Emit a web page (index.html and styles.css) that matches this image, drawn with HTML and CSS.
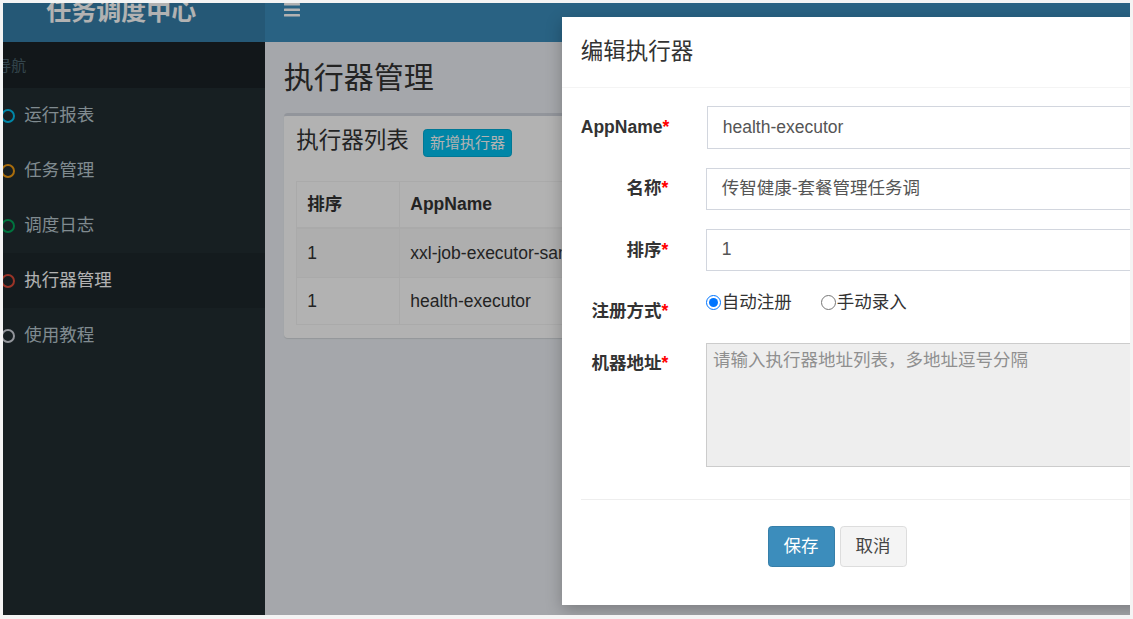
FILE: index.html
```html
<!DOCTYPE html>
<html lang="zh-CN">
<head>
<meta charset="utf-8">
<title>执行器管理</title>
<link rel="stylesheet" href="styles.css">
</head>
<body>
<div class="screen">
  <div class="app">
    <aside class="side-col">
      <div class="logo"><b>任务调度中心</b></div>
      <nav class="sidebar">
        <div class="menu-header">导航</div>
        <ul class="menu">
          <li><a><i class="ring aqua"></i><span>运行报表</span></a></li>
          <li><a><i class="ring yellow"></i><span>任务管理</span></a></li>
          <li><a><i class="ring green"></i><span>调度日志</span></a></li>
          <li class="active"><a><i class="ring red"></i><span>执行器管理</span></a></li>
          <li><a><i class="ring gray"></i><span>使用教程</span></a></li>
        </ul>
      </nav>
    </aside>
    <div class="main-col">
      <header class="navbar">
        <svg class="toggle" width="16" height="14" viewBox="0 0 16 14">
          <rect x="0" y="0" width="16" height="2.5" rx="0.6"/>
          <rect x="0" y="5.5" width="16" height="2.5" rx="0.6"/>
          <rect x="0" y="11" width="16" height="2.5" rx="0.6"/>
        </svg>
      </header>
      <section class="content-header">
        <h1>执行器管理</h1>
      </section>
      <section class="content">
        <div class="box">
          <div class="box-header">
            <h3 class="box-title">执行器列表</h3>
            <span class="btn-add">新增执行器</span>
          </div>
          <div class="box-body">
            <table class="grid">
              <thead>
                <tr class="head"><th class="c1">排序</th><th>AppName</th></tr>
              </thead>
              <tbody>
                <tr class="r1 striped"><td class="c1">1</td><td>xxl-job-executor-sample</td></tr>
                <tr class="r2"><td class="c1">1</td><td>health-executor</td></tr>
              </tbody>
            </table>
          </div>
        </div>
      </section>
    </div>
  </div>

  <div class="backdrop"></div>

  <div class="modal">
    <div class="modal-header">
      <h4 class="modal-title">编辑执行器</h4>
    </div>
    <div class="modal-body">
      <div class="form-row">
        <label class="ctl-label">AppName<span class="req">*</span></label>
        <div class="ctl"><div class="field">health-executor</div></div>
      </div>
      <div class="form-row">
        <label class="ctl-label">名称<span class="req">*</span></label>
        <div class="ctl"><div class="field">传智健康-套餐管理任务调</div></div>
      </div>
      <div class="form-row">
        <label class="ctl-label">排序<span class="req">*</span></label>
        <div class="ctl"><div class="field">1</div></div>
      </div>
      <div class="form-row">
        <label class="ctl-label">注册方式<span class="req">*</span></label>
        <div class="ctl radios">
          <label class="opt"><input type="radio" name="addressType" checked><span>自动注册</span></label>
          <label class="opt second"><input type="radio" name="addressType"><span>手动录入</span></label>
        </div>
      </div>
      <div class="form-row last">
        <label class="ctl-label">机器地址<span class="req">*</span></label>
        <div class="ctl"><div class="area"><span class="ph">请输入执行器地址列表，多地址逗号分隔</span></div></div>
      </div>
      <hr class="sep">
      <div class="actions">
        <span class="btn btn-primary">保存</span>
        <span class="btn btn-default">取消</span>
      </div>
    </div>
  </div>
</div>
</body>
</html>
```

FILE: styles.css
```css
* { box-sizing: border-box; }

html, body {
  margin: 0;
  padding: 0;
  background: #f4f4f4;
}

body {
  font-family: "Liberation Sans", "Noto Sans CJK SC", sans-serif;
  color: #333;
}

.screen {
  position: relative;
  margin: 3px 0 0 3px;
  width: 1127px;
  height: 612px;
  overflow: hidden;
}

.app {
  display: flex;
  margin-left: -25.5px;
  margin-top: -23.5px;
  width: 1400px;
  height: 640px;
}

/* ---------- left column ---------- */
.side-col {
  width: 287.5px;
  flex: 0 0 287.5px;
  background: #222d32;
  display: flex;
  flex-direction: column;
}

.logo {
  height: 62.5px;
  line-height: 62.5px;
  background: #367fa9;
  color: #fff;
  text-align: center;
  font-size: 25px;
  overflow: hidden;
}

.logo b { font-weight: 700; }

.menu-header {
  padding: 12.5px 31.25px 12.5px 18.75px;
  font-size: 15px;
  line-height: 21.4px;
  color: #4b646f;
  background: #1a2226;
}

.menu {
  list-style: none;
  margin: 0;
  padding: 0;
}

.menu li a {
  display: flex;
  align-items: center;
  height: 55px;
  padding-left: 18.75px;
  border-left: 3.75px solid transparent;
  color: #b8c7ce;
  font-size: 17.5px;
  line-height: 25px;
}

.menu li.active a {
  background: #1e282c;
  border-left-color: #3c8dbc;
  color: #fff;
}

.ring {
  display: block;
  width: 14px;
  height: 14px;
  margin-left: 1.5px;
  margin-right: 9.5px;
  border: 2.6px solid #999;
  border-radius: 50%;
}

.ring.aqua { border-color: #00c0ef; }
.ring.yellow { border-color: #f39c12; }
.ring.green { border-color: #00a65a; }
.ring.red { border-color: #dd4b39; }
.ring.gray { border-color: #d2d6de; }

/* ---------- main column ---------- */
.main-col {
  flex: 1;
  background: #ecf0f5;
  display: flex;
  flex-direction: column;
}

.navbar {
  height: 62.5px;
  background: #3c8dbc;
  display: flex;
  align-items: flex-start;
}

.toggle {
  margin: 23px 0 0 18.75px;
  fill: #fff;
}

.content-header {
  padding: 18.75px 18.75px 0;
}

.content-header h1 {
  margin: 0;
  font-size: 30px;
  line-height: 33px;
  font-weight: 400;
  color: #333;
}

.content {
  padding: 18.75px;
}

.box {
  width: 900px;
  background: #fff;
  border-top: 3.75px solid #d2d6de;
  border-radius: 3.75px;
  box-shadow: 0 1px 1px rgba(0, 0, 0, 0.1);
}

.box-header {
  display: flex;
  align-items: flex-start;
  padding: 12.5px 12.5px 12px;
}

.box-title {
  margin: 0;
  font-size: 22.5px;
  line-height: 25px;
  font-weight: 400;
  color: #333;
}

.btn-add {
  margin: 1.25px 0 0 14px;
  height: 27.5px;
  padding: 0 6.25px;
  line-height: 25px;
  font-size: 15px;
  color: #fff;
  background: #00c0ef;
  border: 1.25px solid #00acd6;
  border-radius: 3.75px;
}

.box-body {
  padding: 12.5px;
}

.grid {
  width: 100%;
  border-collapse: collapse;
  border: 1.25px solid #f4f4f4;
  font-size: 17.5px;
  line-height: 25px;
  color: #333;
}

.grid th,
.grid td {
  border: 1.25px solid #f4f4f4;
  padding: 0 10px;
  text-align: left;
  vertical-align: middle;
}

.grid th { font-weight: 700; border-bottom-width: 2.5px; }

.grid .c1 { width: 103px; }

.grid tr.head th { height: 46px; }
.grid tr.r1 td { height: 50px; }
.grid tr.r2 td { height: 47px; }
.grid tr.striped td { background: #f9f9f9; }

/* ---------- overlay ---------- */
.backdrop {
  position: absolute;
  inset: 0;
  background: rgba(0, 0, 0, 0.3);
}

.modal {
  position: absolute;
  left: 559px;
  top: 14px;
  width: 750px;
  background: #fff;
  box-shadow: 0 5px 15px rgba(0, 0, 0, 0.25);
}

.modal-header {
  padding: 18.75px;
  border-bottom: 1.25px solid #f4f4f4;
}

.modal-title {
  margin: 0;
  font-size: 22.5px;
  line-height: 32px;
  font-weight: 400;
  color: #333;
}

.modal-body {
  padding: 18.75px;
}

.form-row {
  display: flex;
  margin-bottom: 18.75px;
}

.form-row.last { margin-bottom: 0; }

.ctl-label {
  flex: 0 0 87.5px;
  margin-right: 37.5px;
  padding-top: 8.75px;
  text-align: right;
  font-size: 17.5px;
  line-height: 25px;
  font-weight: 700;
  color: #333;
  white-space: nowrap;
}

.req { color: #f00; }

.ctl {
  flex: 1;
  margin-right: -1.25px;
}

.field {
  height: 42.5px;
  padding: 7.5px 15px;
  border: 1.25px solid #d2d6de;
  background: #fff;
  font-size: 17.5px;
  line-height: 25px;
  color: #555;
}

.radios {
  display: flex;
  align-items: flex-start;
  font-size: 17.5px;
  line-height: 25px;
  color: #333;
}

.opt {
  display: flex;
  align-items: flex-start;
}

.opt input {
  width: 15px;
  height: 15px;
  margin: 5px 1px 0 0;
  accent-color: #0075ff;
}

.opt.second { margin-left: 29px; }

.area {
  height: 124px;
  padding: 6.25px;
  border: 1.25px solid #ccc;
  background: #eee;
  font-size: 17.5px;
  line-height: 21px;
}

.ph { color: #8f8f8f; }

.sep {
  margin: 32.5px 0 0;
  border: 0;
  border-top: 1.25px solid #eee;
  height: 0;
}

.actions {
  display: flex;
  padding-left: 186.75px;
  margin-top: 25.75px;
  margin-bottom: 18.75px;
}

.btn {
  display: block;
  height: 41.5px;
  padding: 0 15px;
  font-size: 17.5px;
  line-height: 39px;
  border: 1.25px solid transparent;
  border-radius: 3.75px;
}

.btn-primary {
  background: #3c8dbc;
  border-color: #367fa9;
  color: #fff;
}

.btn-default {
  margin-left: 5px;
  background: #f4f4f4;
  border-color: #ddd;
  color: #444;
}
```
